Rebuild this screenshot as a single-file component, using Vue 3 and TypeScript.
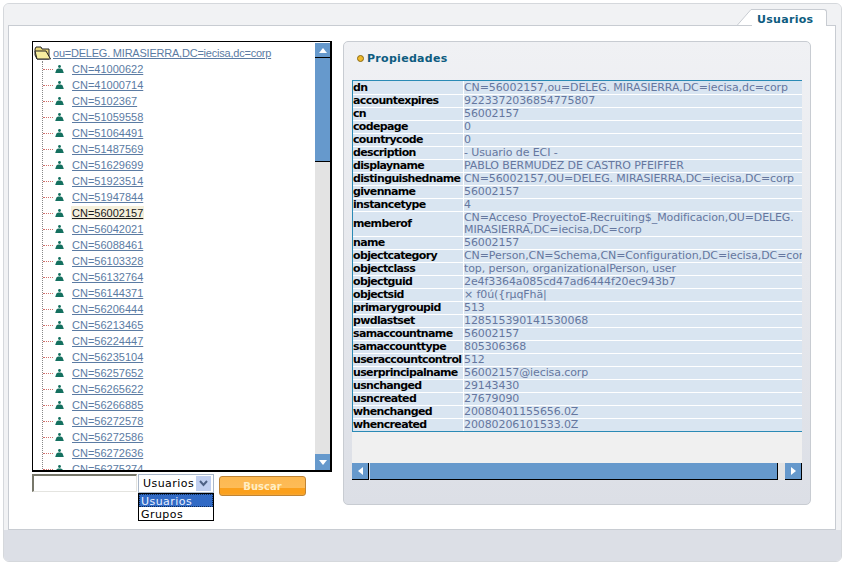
<script setup lang="ts">
const users = [
  "41000622", "41000714", "5102367", "51059558", "51064491", "51487569", "51629699",
  "51923514", "51947844", "56002157", "56042021", "56088461", "56103328", "56132764",
  "56144371", "56206444", "56213465", "56224447", "56235104", "56257652", "56265622",
  "56266885", "56272578", "56272586", "56272636", "56275274",
];

const props: { name: string; lines: string[] }[] = [
  { name: "dn", lines: ["CN=56002157,ou=DELEG. MIRASIERRA,DC=iecisa,dc=corp"] },
  { name: "accountexpires", lines: ["9223372036854775807"] },
  { name: "cn", lines: ["56002157"] },
  { name: "codepage", lines: ["0"] },
  { name: "countrycode", lines: ["0"] },
  { name: "description", lines: ["- Usuario de ECI -"] },
  { name: "displayname", lines: ["PABLO BERMUDEZ DE CASTRO PFEIFFER"] },
  { name: "distinguishedname", lines: ["CN=56002157,OU=DELEG. MIRASIERRA,DC=iecisa,DC=corp"] },
  { name: "givenname", lines: ["56002157"] },
  { name: "instancetype", lines: ["4"] },
  { name: "memberof", lines: ["CN=Acceso_ProyectoE-Recruiting$_Modificacion,OU=DELEG.", "MIRASIERRA,DC=iecisa,DC=corp"] },
  { name: "name", lines: ["56002157"] },
  { name: "objectcategory", lines: ["CN=Person,CN=Schema,CN=Configuration,DC=iecisa,DC=corp"] },
  { name: "objectclass", lines: ["top, person, organizationalPerson, user"] },
  { name: "objectguid", lines: ["2e4f3364a085cd47ad6444f20ec943b7"] },
  { name: "objectsid", lines: ["× f0ú({rµqFhä|"] },
  { name: "primarygroupid", lines: ["513"] },
  { name: "pwdlastset", lines: ["128515390141530068"] },
  { name: "samaccountname", lines: ["56002157"] },
  { name: "samaccounttype", lines: ["805306368"] },
  { name: "useraccountcontrol", lines: ["512"] },
  { name: "userprincipalname", lines: ["56002157@iecisa.corp"] },
  { name: "usnchanged", lines: ["29143430"] },
  { name: "usncreated", lines: ["27679090"] },
  { name: "whenchanged", lines: ["20080401155656.0Z"] },
  { name: "whencreated", lines: ["20080206101533.0Z"] },
];
</script>

<template>
  <div class="frame">
    <header class="top">
      <svg class="tab-slope" width="15" height="17" viewBox="0 0 15 17">
        <path d="M0 16.5 L14 0.5 L15 0.5 L15 17 L0 17 Z" fill="#fff" />
        <path d="M0 16.5 L14 0.5 L15 0.5" fill="none" stroke="#c8ccd2" />
      </svg>
      <div class="tab">Usuarios</div>
    </header>

    <main class="body">
      <section class="left">
        <div class="tree">
          <div class="tree-list">
            <div class="root">
              <svg class="folder" width="17" height="14" viewBox="0 0 17 14">
                <path d="M1 3 L2 1 L7 1 L8 3 L15 3 L15 13 L3 13 L1 9 Z" fill="#e8d77a" stroke="#222" />
                <path d="M1 5 L12 5 L16.5 13 L3 13 Z" fill="#f7ee9f" stroke="#222" />
              </svg>
              <a class="link root-link">ou=DELEG. MIRASIERRA,DC=iecisa,dc=corp</a>
            </div>
            <ul class="nodes">
              <li v-for="u in users" :key="u" class="node">
                <span class="dash"></span>
                <svg class="person" width="9" height="8" viewBox="0 0 9 8">
                  <circle cx="4.5" cy="1.5" r="1.4" fill="#14705f" />
                  <path d="M0.2 8 L1.4 4.6 L3 3.4 L6 3.4 L7.6 4.6 L8.8 8 Z" fill="#14705f" />
                </svg>
                <a class="link" :class="{ sel: u === '56002157' }">CN={{ u }}</a>
              </li>
            </ul>
          </div>
          <div class="vbar">
            <div class="arrow">
              <svg width="8" height="5" viewBox="0 0 8 5"><path d="M4 0 L8 5 L0 5 Z" fill="#fff" /></svg>
            </div>
            <div class="vthumb"></div>
            <div class="vtrack"></div>
            <div class="arrow down">
              <svg width="8" height="5" viewBox="0 0 8 5"><path d="M0 0 L8 0 L4 5 Z" fill="#fff" /></svg>
            </div>
          </div>
        </div>

        <div class="search">
          <div class="input"></div>
          <div class="combo">
            <div class="closed">
              <span>Usuarios</span>
              <span class="drop">
                <svg width="9" height="7" viewBox="0 0 9 7"><path d="M1 1 L4.5 5 L8 1" fill="none" stroke="#4d6185" stroke-width="2" /></svg>
              </span>
            </div>
            <div class="options">
              <div class="opt active">Usuarios</div>
              <div class="opt">Grupos</div>
            </div>
          </div>
          <button class="btn" type="button">Buscar</button>
        </div>
      </section>

      <section class="panel">
        <h2 class="title"><span class="bullet"></span>Propiedades</h2>
        <div class="scroller">
          <div class="table-view">
            <table class="props">
              <tbody>
                <tr v-for="p in props" :key="p.name">
                  <th>{{ p.name }}</th>
                  <td><div v-for="l in p.lines" :key="l">{{ l }}</div></td>
                </tr>
              </tbody>
            </table>
          </div>
          <div class="hbar">
            <div class="harrow">
              <svg width="5" height="8" viewBox="0 0 5 8"><path d="M5 0 L5 8 L0 4 Z" fill="#fff" /></svg>
            </div>
            <div class="hthumb"></div>
            <div class="htrack"></div>
            <div class="harrow">
              <svg width="5" height="8" viewBox="0 0 5 8"><path d="M0 0 L0 8 L5 4 Z" fill="#fff" /></svg>
            </div>
          </div>
        </div>
      </section>
    </main>

    <footer class="bottom"></footer>
  </div>
</template>

<style>
html,
body {
  margin: 0;
  background: #fff;
}
</style>

<style scoped>
.frame {
  box-sizing: border-box;
  width: 839px;
  height: 559px;
  margin: 3px 0 0 3px;
  display: flex;
  flex-direction: column;
  background: #f1f2f4;
  border: 1px solid #d5d8dc;
  border-radius: 6px;
  overflow: hidden;
  font-family: "DejaVu Sans", sans-serif;
}

.top {
  height: 21px;
  flex: none;
  display: flex;
  justify-content: flex-end;
  align-items: flex-end;
  padding-right: 14px;
  background: #f1f2f4;
}

.tab-slope {
  display: block;
  margin-bottom: -1px;
}

.tab {
  box-sizing: border-box;
  width: 75px;
  height: 17px;
  margin-bottom: -1px;
  padding-top: 3px;
  padding-left: 5px;
  background: #fff;
  border-top: 1px solid #c8ccd2;
  border-right: 1px solid #c8ccd2;
  border-top-right-radius: 3px;
  color: #0e5c80;
  font-size: 11px;
  font-weight: bold;
  letter-spacing: 0.3px;
  position: relative;
}

.body {
  box-sizing: border-box;
  height: 505px;
  flex: none;
  margin: 0 5px 0 4px;
  padding: 15px 24px 0 23px;
  display: flex;
  gap: 11px;
  background: #fff;
  border: 1px solid #c8ccd2;
}

.left {
  width: 300px;
  flex: none;
}

.tree {
  box-sizing: border-box;
  height: 431px;
  display: flex;
  border: 1px solid #000;
  border-width: 1px 2px 2px 1px;
  background: #fff;
}

.tree-list {
  flex: 1;
  min-width: 0;
  overflow: hidden;
  padding-top: 3px;
  font-family: "Liberation Sans", sans-serif;
  font-size: 11px;
}

.root {
  height: 16px;
  display: flex;
  align-items: center;
  padding-left: 1px;
}

.folder {
  flex: none;
  margin-right: 2px;
}

.link {
  color: #5b7ba3;
  text-decoration: underline;
  white-space: nowrap;
  line-height: 14px;
}

.root-link {
  letter-spacing: -0.22px;
}

.nodes {
  list-style: none;
  margin: 0 0 0 9px;
  padding: 0;
  border-left: 1px dotted #888;
}

.node {
  height: 16px;
  display: flex;
  align-items: center;
}

.dash {
  width: 10px;
  flex: none;
  border-top: 1px dotted #d0706c;
}

.person {
  flex: none;
  margin: 0 8px 0 2px;
}

.sel {
  margin-left: -1px;
  padding: 0 1px;
  background: #f5f0dc;
  color: #1a1a1a;
}

.vbar {
  width: 15px;
  flex: none;
  display: flex;
  flex-direction: column;
  padding-top: 1px;
  background: #fff;
}

.arrow {
  box-sizing: border-box;
  height: 15px;
  flex: none;
  display: flex;
  align-items: center;
  justify-content: center;
  background: #6699cc;
  border-bottom: 1px solid #000;
}

.down {
  height: 16px;
  border-bottom: 0;
}

.vthumb {
  height: 103px;
  flex: none;
  background: #6699cc;
  border-bottom: 1px solid #000;
}

.vtrack {
  flex: 1;
  background: #e3e3e3;
}

.search {
  display: flex;
  align-items: flex-start;
  margin-top: 2px;
}

.input {
  box-sizing: border-box;
  width: 105px;
  height: 18px;
  margin-right: 1px;
  background: #fff;
  border: 1px solid #e4e4e0;
  border-top: 2px solid #77776a;
  border-left: 2px solid #77776a;
}

.combo {
  position: relative;
  width: 76px;
  margin-right: 5px;
  font-size: 11px;
  letter-spacing: 0.45px;
}

.closed {
  box-sizing: border-box;
  height: 19px;
  display: flex;
  align-items: center;
  justify-content: space-between;
  padding: 0 2px 0 4px;
  background: #fff;
  border: 1px solid #a9b7c9;
}

.drop {
  width: 15px;
  height: 15px;
  display: flex;
  align-items: center;
  justify-content: center;
  background: #c0cff0;
}

.options {
  position: absolute;
  top: 19px;
  left: 0;
  right: 0;
  box-sizing: border-box;
  height: 28px;
  background: #fff;
  border: 1px solid #000;
}

.opt {
  height: 13px;
  line-height: 15px;
  padding-left: 2px;
}

.active {
  background: #316ac5;
  color: #e8f0ff;
  outline: 1px dotted #0d2a55;
  outline-offset: -1px;
}

.btn {
  box-sizing: border-box;
  width: 87px;
  height: 20px;
  margin-top: 2px;
  padding: 0;
  border: 1px solid #c08434;
  border-radius: 3px;
  background: linear-gradient(#fdb850, #fdbc58 60%, #fba01c 60%, #fba01c 90%, #f5a93a);
  color: #ffeec4;
  font-family: "DejaVu Sans", sans-serif;
  font-size: 10px;
  font-weight: bold;
}

.panel {
  box-sizing: border-box;
  width: 468px;
  height: 464px;
  flex: none;
  padding: 0 9px 0 8px;
  border: 1px solid #c8ccd2;
  border-radius: 5px;
  background: linear-gradient(#f0f1f4, #e6e8ed 50%, #dcdfe6);
}

.title {
  display: flex;
  align-items: center;
  height: 14px;
  margin: 9px 0 15px;
  color: #0e5c80;
  font-size: 11px;
  font-weight: bold;
  letter-spacing: 0.3px;
}

.bullet {
  width: 5px;
  height: 5px;
  margin-right: 3px;
  margin-left: 5px;
  border: 1px solid #8a6a10;
  border-radius: 50%;
  background: #f0b92c;
}

.scroller {
  width: 450px;
  display: flex;
  flex-direction: column;
}

.table-view {
  height: 383px;
  overflow: hidden;
  background: #f0f0f0;
}

.props {
  width: 450px;
  table-layout: fixed;
  border-collapse: separate;
  border-spacing: 0;
  border-top: 1px solid #2a8ab5;
  border-bottom: 1px solid #2a8ab5;
  border-left: 1px solid #2a8ab5;
  font-size: 11px;
}

.props th,
.props td {
  padding: 0;
  background: #d9e5f1;
  border-bottom: 1px solid #fff;
  height: 12px;
  line-height: 12px;
  white-space: nowrap;
}

.props tr:first-child th,
.props tr:first-child td {
  padding-top: 1px;
}

.props tr:last-child th,
.props tr:last-child td {
  border-bottom: 0;
}

.props th {
  width: 110px;
  border-right: 1px solid #fff;
  color: #000;
  text-align: left;
  font-weight: bold;
  letter-spacing: -0.65px;
}

.props td {
  color: #65779f;
  letter-spacing: -0.1px;
  overflow: hidden;
}

.hbar {
  height: 17px;
  display: flex;
}

.harrow {
  box-sizing: border-box;
  width: 17px;
  flex: none;
  display: flex;
  align-items: center;
  justify-content: center;
  background: #6699cc;
  border-bottom: 1px solid #000;
  border-right: 1px solid #000;
}

.hthumb {
  flex: 1;
  margin-left: 1px;
  background: #6699cc;
  border-bottom: 1px solid #000;
  border-right: 1px solid #000;
}

.htrack {
  width: 7px;
  flex: none;
  background: #e3e3e3;
}

.bottom {
  flex: 1;
  background: #dcdfe6;
}
</style>
